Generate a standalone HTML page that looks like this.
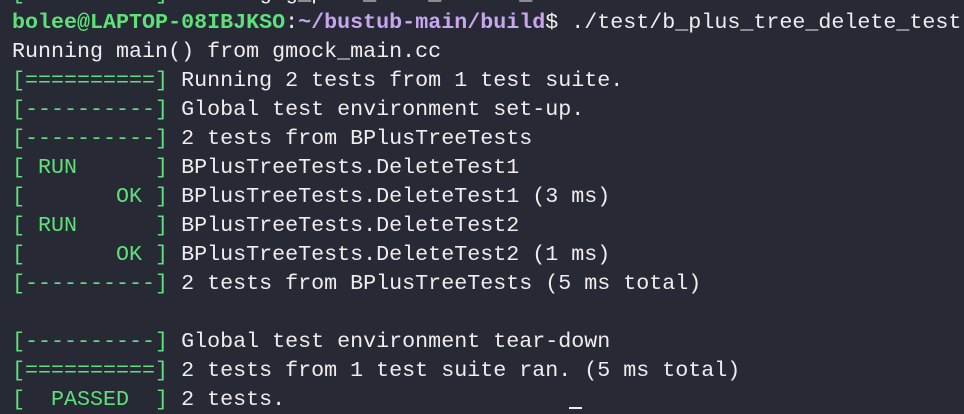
<!DOCTYPE html>
<html><head><meta charset="utf-8"><style>
html,body{margin:0;padding:0;background:#272935;width:964px;height:412px;overflow:hidden}
pre{position:absolute;left:12px;top:-21px;margin:0;font-family:"Liberation Mono","DejaVu Sans Mono",monospace;font-size:21.68px;line-height:29px;color:#eeeeee;white-space:pre}
.g{color:#5ee07a}.p{color:#c7a6ef}.b{font-weight:bold}
.cur{position:absolute;left:569px;top:407px;width:13px;height:2px;background:#eee}
</style></head><body>
<pre><span class="g">[</span>          <span class="g">]</span> Running g_plus_tree_delete_test
<span class="g b">bolee@LAPTOP-08IBJKSO</span>:<span class="p b">~/bustub-main/build</span>$ ./test/b_plus_tree_delete_test
Running main() from gmock_main.cc
<span class="g">[==========]</span> Running 2 tests from 1 test suite.
<span class="g">[----------]</span> Global test environment set-up.
<span class="g">[----------]</span> 2 tests from BPlusTreeTests
<span class="g">[ RUN      ]</span> BPlusTreeTests.DeleteTest1
<span class="g">[       OK ]</span> BPlusTreeTests.DeleteTest1 (3 ms)
<span class="g">[ RUN      ]</span> BPlusTreeTests.DeleteTest2
<span class="g">[       OK ]</span> BPlusTreeTests.DeleteTest2 (1 ms)
<span class="g">[----------]</span> 2 tests from BPlusTreeTests (5 ms total)

<span class="g">[----------]</span> Global test environment tear-down
<span class="g">[==========]</span> 2 tests from 1 test suite ran. (5 ms total)
<span class="g">[  PASSED  ]</span> 2 tests.
</pre>
<div class="cur"></div>
</body></html>
